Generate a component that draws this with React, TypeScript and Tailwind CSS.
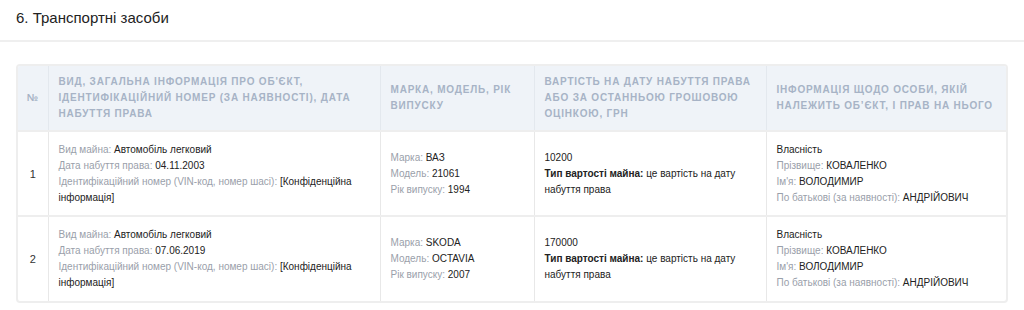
const rows = [
  {
    n: "1",
    date: "04.11.2003",
    brand: "ВАЗ",
    model: "21061",
    year: "1994",
    cost: "10200",
  },
  {
    n: "2",
    date: "07.06.2019",
    brand: "SKODA",
    model: "OCTAVIA",
    year: "2007",
    cost: "170000",
  },
];

const L = ({ children }: { children: React.ReactNode }) => (
  <span className="text-[#9aa0aa]">{children}</span>
);

export default function App() {
  return (
    <div className="bg-white min-h-[310px] font-['Liberation_Sans',Arial,sans-serif] text-[#222]">
      <h2 className="px-4 pt-[8px] pb-[12px] text-[15px] leading-[20px] text-[#222]">
        6. Транспортні засоби
      </h2>
      <div className="h-[2px] bg-[#efefef]" />
      <div className="px-4 pt-[22px]">
        <div className="border-2 border-[#eeeeee] rounded-[4px] overflow-hidden">
          <table className="w-full border-collapse table-fixed text-[10px] leading-[16px]">
            <colgroup>
              <col className="w-[30px]" />
              <col className="w-[332px]" />
              <col className="w-[154px]" />
              <col className="w-[232px]" />
              <col />
            </colgroup>
            <thead>
              <tr className="bg-[#eff3f8] text-[#a7b3c6] text-[10px] font-bold uppercase tracking-[0.8px] text-left">
                <th className="h-[64px] text-center font-bold border-r border-[#e3e8ee]">№</th>
                <th className="px-[10px] py-[8px] font-bold border-r border-[#e3e8ee]">
                  Вид, загальна інформація про об'єкт, ідентифікаційний номер (за наявності), дата набуття права
                </th>
                <th className="px-[10px] py-[8px] font-bold border-r border-[#e3e8ee]">
                  Марка, модель, рік випуску
                </th>
                <th className="px-[10px] py-[8px] font-bold border-r border-[#e3e8ee]">
                  Вартість на дату набуття права або за останньою грошовою оцінкою, грн
                </th>
                <th className="px-[10px] py-[8px] font-bold">
                  Інформація щодо особи, якій належить об’єкт, і прав на нього
                </th>
              </tr>
            </thead>
            <tbody>
              {rows.map((r, i) => (
                <tr key={r.n} className={i === 0 ? "border-t-2 border-b-2 border-[#eeeeee]" : ""}>
                  <td className="h-[85px] text-center border-r border-[#e8e8e8] text-[#333] text-[11px]">{r.n}</td>
                  <td className="px-[10px] align-middle border-r border-[#e8e8e8]">
                    <div><L>Вид майна:</L> Автомобіль легковий</div>
                    <div><L>Дата набуття права:</L> {r.date}</div>
                    <div>
                      <L>Ідентифікаційний номер (VIN-код, номер шасі):</L> [Конфіденційна інформація]
                    </div>
                  </td>
                  <td className="px-[10px] align-middle border-r border-[#e8e8e8]">
                    <div><L>Марка:</L> {r.brand}</div>
                    <div><L>Модель:</L> {r.model}</div>
                    <div><L>Рік випуску:</L> {r.year}</div>
                  </td>
                  <td className="px-[10px] align-middle border-r border-[#e8e8e8]">
                    <div>{r.cost}</div>
                    <div>
                      <b>Тип вартості майна:</b> це вартість на дату набуття права
                    </div>
                  </td>
                  <td className="px-[10px] align-middle">
                    <div>Власність</div>
                    <div><L>Прізвище:</L> КОВАЛЕНКО</div>
                    <div><L>Ім'я:</L> ВОЛОДИМИР</div>
                    <div><L>По батькові (за наявності):</L> АНДРІЙОВИЧ</div>
                  </td>
                </tr>
              ))}
            </tbody>
          </table>
        </div>
      </div>
    </div>
  );
}
